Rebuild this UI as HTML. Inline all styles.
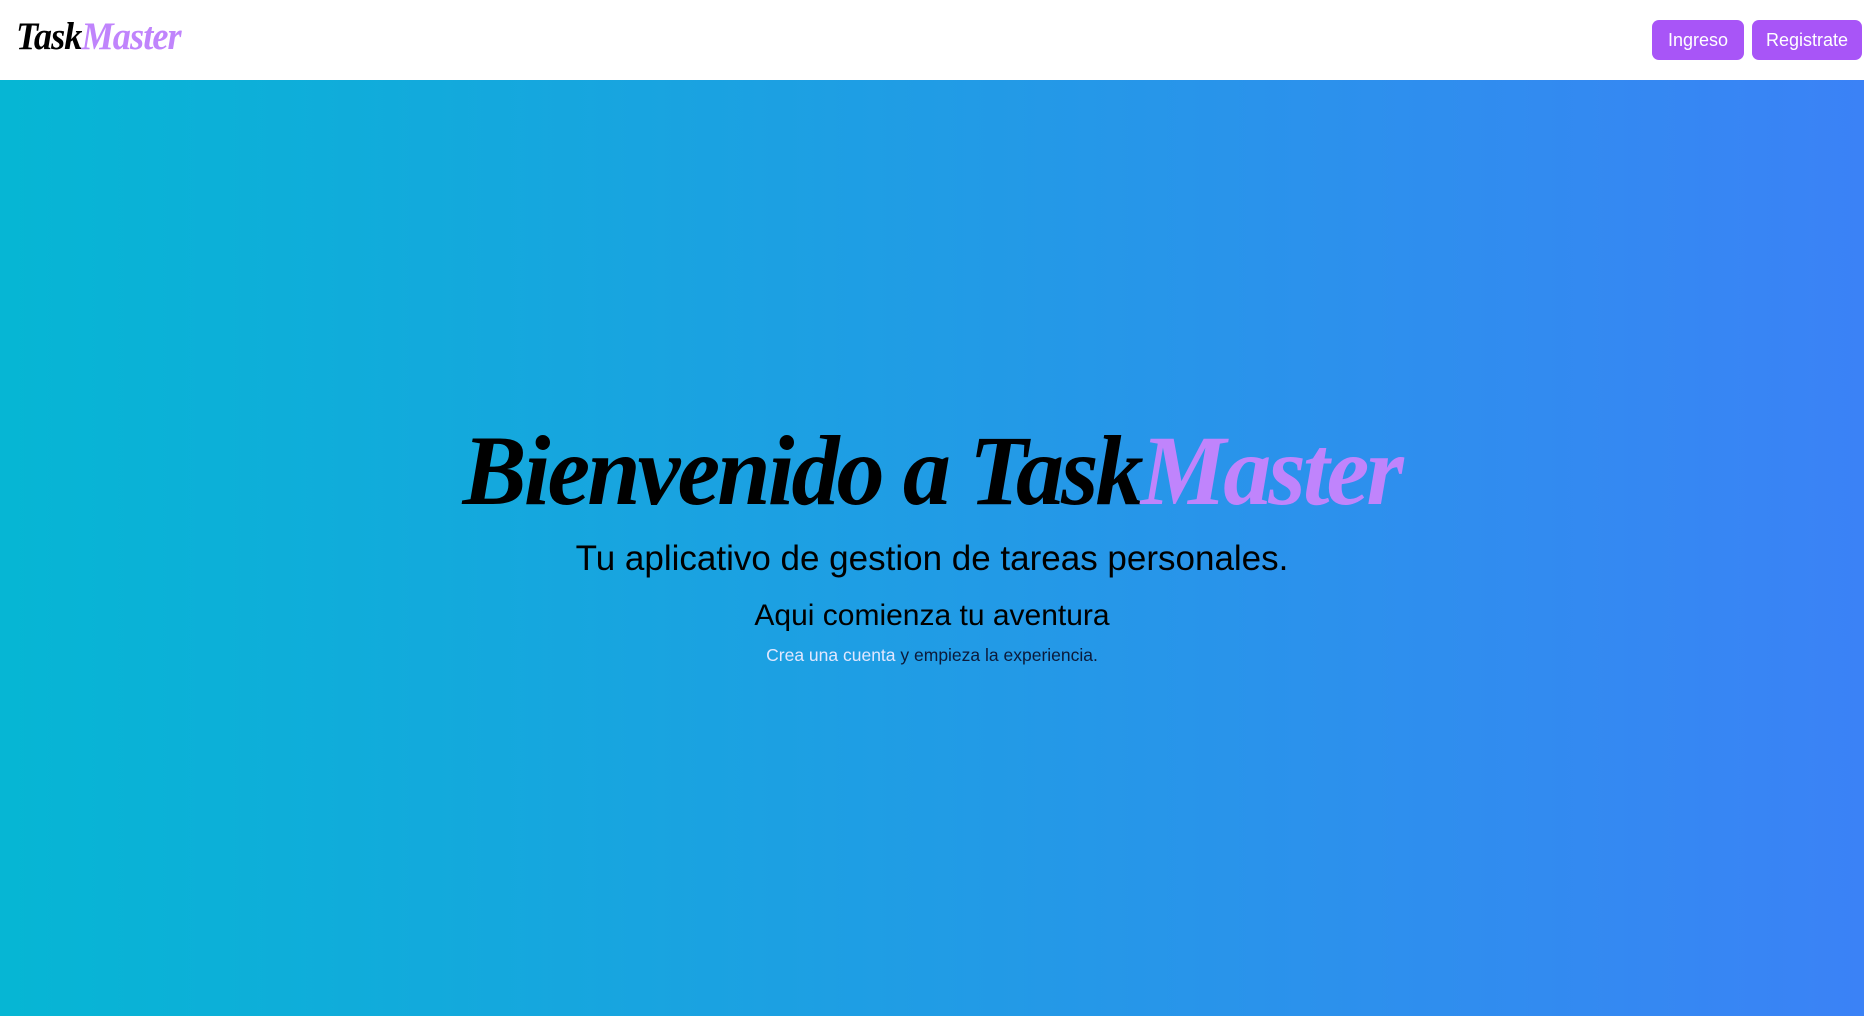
<!DOCTYPE html>
<html><head><meta charset="utf-8"><style>
*{margin:0;padding:0;box-sizing:border-box}
html,body{width:1864px;height:1016px;overflow:hidden;font-family:"Liberation Sans",sans-serif}
header{height:80px;background:#fff;position:relative}
.logo{position:absolute;left:16px;top:14px;font-family:"Liberation Serif",serif;font-style:italic;font-weight:bold;font-size:39px;letter-spacing:-1px;transform:scaleX(0.93);transform-origin:left}
.p{color:#c084fc}
.btn{position:absolute;top:20px;height:40px;background:#a855f7;color:#fff;border-radius:7px;font-size:18px;line-height:40px;text-align:center}
main{height:936px;background:linear-gradient(90deg,#06b6d4,#3b82f6);position:relative;text-align:center}
.t{position:absolute;left:0;width:1864px;white-space:nowrap}
h1{top:333px;font-family:"Liberation Serif",serif;font-style:italic;font-weight:bold;font-size:100px;letter-spacing:-3px;color:#000}
h1 .in{display:inline-block;transform:scaleX(0.96)}
</style></head><body>
<header>
<div class="logo">Task<span class="p">Master</span></div>
<div class="btn" style="left:1652px;width:92px">Ingreso</div>
<div class="btn" style="left:1752px;width:110px">Registrate</div>
</header>
<main>
<h1 class="t"><span class="in">Bienvenido a Task<span class="p">Master</span></span></h1>
<div class="t" style="top:459px;font-size:35px;color:#000">Tu aplicativo de gestion de tareas personales.</div>
<div class="t" style="top:519px;font-size:30px;color:#000">Aqui comienza tu aventura</div>
<div class="t" style="top:565px;font-size:17.5px;color:#0b1a3a"><span style="color:#e0e7ff">Crea una cuenta</span> y empieza la experiencia.</div>
</main>
</body></html>
